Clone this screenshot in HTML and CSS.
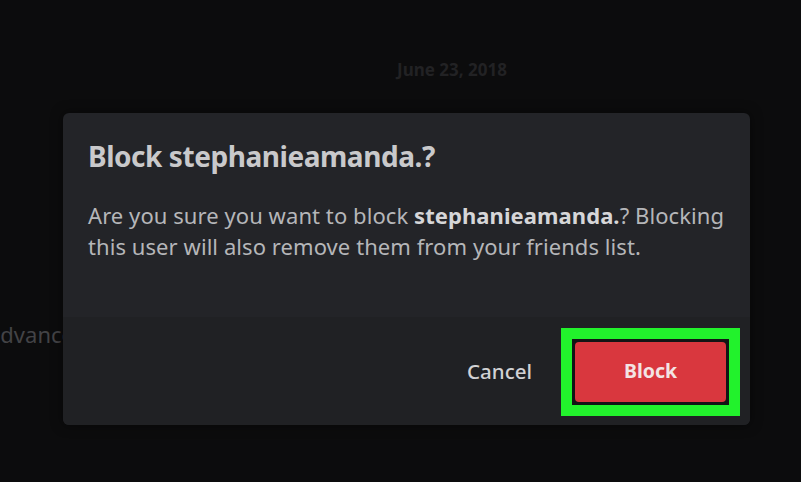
FILE: index.html
```html
<!DOCTYPE html>
<html lang="en">
<head>
<meta charset="utf-8">
<title>Block user</title>
<link rel="stylesheet" href="styles.css">
</head>
<body>
<div class="page">
  <div class="chat">
    <div class="date-divider"><span class="date">June 23, 2018</span></div>
    <div class="chat-line">advanced</div>
  </div>
  <div class="overlay">
    <div class="dialog">
      <div class="dialog-body">
        <h1 class="title">Block stephanieamanda.?</h1>
        <p class="text">Are you sure you want to block <strong>stephanieamanda.</strong>? Blocking this user will also remove them from your friends list.</p>
      </div>
      <div class="dialog-footer">
        <button class="btn-cancel">Cancel</button>
        <span class="highlight"><button class="btn-block">Block</button></span>
      </div>
    </div>
  </div>
</div>
</body>
</html>
```
FILE: styles.css
```css
* { box-sizing: border-box; }
html, body {
  margin: 0;
  padding: 0;
  width: 801px;
  height: 482px;
  overflow: hidden;
  background: #0c0c0d;
  font-family: "Noto Sans", "Open Sans", sans-serif;
}
.page {
  position: relative;
  width: 801px;
  height: 482px;
}
.chat {
  display: flex;
  flex-direction: column;
}
.date-divider {
  display: flex;
  justify-content: center;
  padding-top: 58px;
  padding-left: 103px;
}
.date {
  font-size: 17px;
  font-weight: 700;
  color: #222224;
  line-height: 24px;
}
.chat-line {
  margin-top: 237px;
  margin-left: -12px;
  font-size: 22px;
  line-height: 30px;
  color: #434346;
  white-space: nowrap;
}
.overlay {
  position: absolute;
  left: 0;
  top: 0;
  width: 801px;
  height: 482px;
  display: flex;
  align-items: flex-start;
  padding: 113px 0 0 63px;
}
.dialog {
  width: 687px;
  height: 312px;
  border-radius: 6px;
  background: #232428;
  display: flex;
  flex-direction: column;
  overflow: hidden;
  box-shadow: 0 0 12px rgba(0,0,0,0.5);
}
.dialog-body {
  flex: 1;
  padding: 26px 18px 0 25px;
}
.title {
  margin: 0;
  font-size: 28px;
  line-height: 34px;
  font-weight: 700;
  color: #c9c9cb;
  letter-spacing: -0.45px;
}
.text {
  margin: 27px 0 0;
  font-size: 22px;
  line-height: 31px;
  color: #b5b6b9;
  letter-spacing: 0.07px;
}
.text strong {
  font-weight: 700;
  color: #d6d6d8;
}
.dialog-footer {
  height: 108px;
  background: #202124;
  display: flex;
  justify-content: flex-end;
  align-items: center;
  padding: 0 10px 0 0;
  gap: 29px;
}
.btn-cancel {
  background: none;
  border: none;
  padding: 0;
  margin-top: 0;
  font-family: inherit;
  font-size: 20.5px;
  font-weight: 500;
  color: #d2d2d4;
}
.highlight {
  display: flex;
  border: 11px solid #22f22c;
  padding: 3px;
  background: #131415;
  margin-top: 2px;
}
.btn-block {
  width: 151px;
  height: 60px;
  border: none;
  border-radius: 4px;
  background: #d9373e;
  color: #f3e4e4;
  font-family: inherit;
  font-size: 19.5px;
  font-weight: 700;
  padding: 0 0 3px;
}
```
